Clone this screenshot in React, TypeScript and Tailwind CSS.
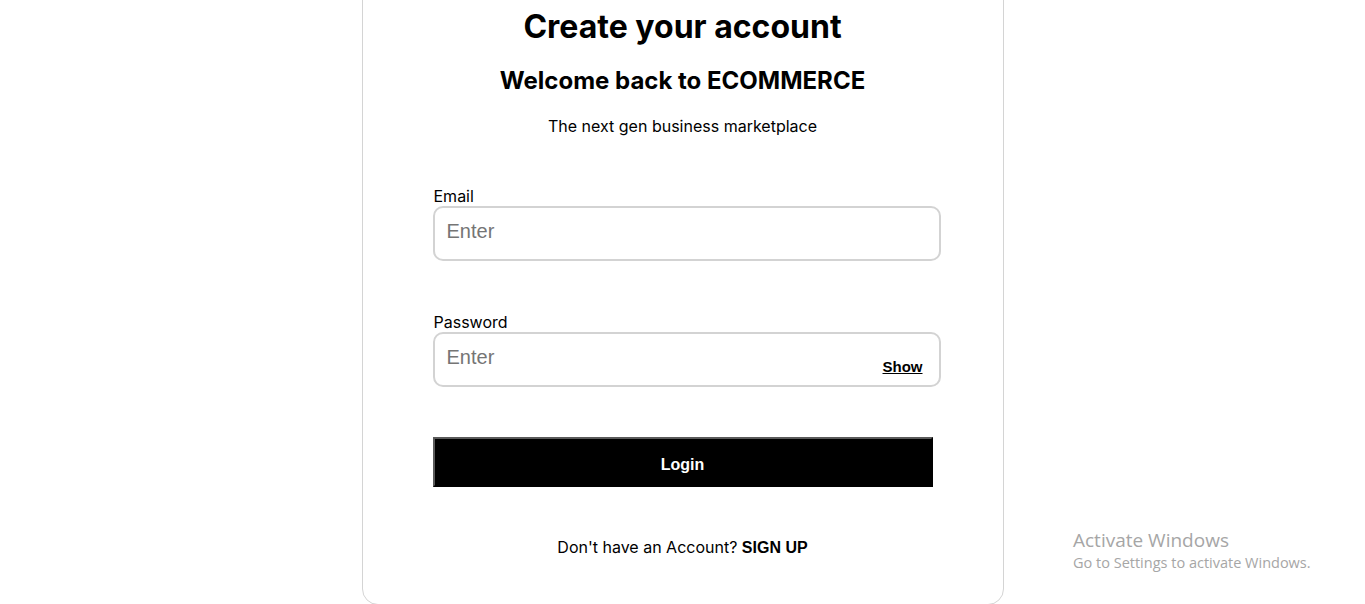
export default function App() {
  return (
    <div className="relative min-h-[604px] w-full overflow-hidden bg-white font-['Inter',sans-serif] text-black">
      <div className="mx-auto -mt-[40px] flex w-[642px] flex-col items-center rounded-2xl border border-[#d4d4d4] pt-[47px] pb-[46px]">
        <h1 className="text-[32px] leading-[38px] font-bold">Create your account</h1>
        <h2 className="mt-[20px] text-2xl leading-[29px] font-bold">Welcome back to ECOMMERCE</h2>
        <p className="mt-[21px] text-base leading-5">The next gen business marketplace</p>

        <form className="mt-[50px] ml-[8px] flex w-[508px] flex-col">
          <label className="pl-px text-base leading-5">Email</label>
          <div className="flex h-[55px] items-center rounded-[10px] border-2 border-[#d3d3d3] px-3 pb-[6px]">
            <input
              type="email"
              placeholder="Enter"
              className="w-full bg-transparent font-['Liberation_Sans',Arial,sans-serif] text-[20px] outline-none placeholder:text-[#757575]"
            />
          </div>

          <label className="mt-[51px] pl-px text-base leading-5">Password</label>
          <div className="flex h-[55px] items-center rounded-[10px] border-2 border-[#d3d3d3] pr-4 pl-3 pb-[6px]">
            <input
              type="password"
              placeholder="Enter"
              className="w-full bg-transparent font-['Liberation_Sans',Arial,sans-serif] text-[20px] outline-none placeholder:text-[#757575]"
            />
            <button
              type="button"
              className="mt-[21px] font-['Liberation_Sans',Arial,sans-serif] text-[15px] font-bold underline"
            >
              Show
            </button>
          </div>

          <button
            type="button"
            className="mt-[50px] h-[50px] w-[500px] border-2 border-t-[#5a5a5a] border-r-black border-b-black border-l-[#5a5a5a] bg-black pt-[5px] font-['Liberation_Sans',Arial,sans-serif] text-base font-bold text-white"
          >
            Login
          </button>
        </form>

        <p className="mt-[50px] text-base leading-5">
          Don't have an Account?{' '}
          <span className="font-['Liberation_Sans',Arial,sans-serif] font-bold">SIGN UP</span>
        </p>
      </div>

      <div className="pointer-events-none absolute top-[528px] left-[1073px] font-['Open_Sans',sans-serif] text-[#a6a6a6]">
        <div className="text-[19px] leading-6">Activate Windows</div>
        <div className="text-[14.5px] leading-[22px]">Go to Settings to activate Windows.</div>
      </div>
    </div>
  );
}
